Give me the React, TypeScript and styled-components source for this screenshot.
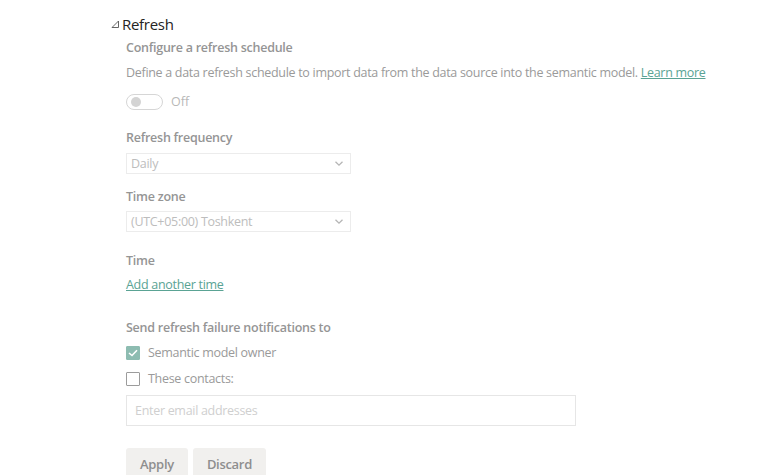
import React from "react";
import styled, { createGlobalStyle } from "styled-components";

const GlobalStyle = createGlobalStyle`
  body {
    margin: 0;
    background: #ffffff;
    font-family: "Open Sans", "Noto Sans", Arial, sans-serif;
  }
`;

const Page = styled.div`
  width: 757px;
  height: 475px;
  overflow: hidden;
  padding: 14px 0 0 111px;
  box-sizing: border-box;
`;

const SectionHeader = styled.div`
  display: flex;
  align-items: center;
  gap: 2px;
  color: #252423;
  font-size: 15px;
  line-height: 20px;
  letter-spacing: -0.3px;
`;

const Body = styled.div`
  padding-left: 15px;
  display: flex;
  flex-direction: column;
`;

const Heading = styled.div<{ $top?: number }>`
  margin-top: ${(p) => p.$top ?? 0}px;
  color: #959595;
  font-size: 12.5px;
  font-weight: 600;
  line-height: 18px;
  letter-spacing: -0.25px;
`;

const Description = styled.div`
  margin-top: 7px;
  color: #9a9a9a;
  font-size: 12.5px;
  line-height: 18px;
  letter-spacing: -0.3px;
`;

const Link = styled.a`
  color: #5aa394;
  text-decoration: underline;
  cursor: pointer;
`;

const ToggleRow = styled.div`
  margin-top: 11px;
  display: flex;
  align-items: center;
  gap: 8px;
  color: #b8b8b8;
  font-size: 12.5px;
`;

const Track = styled.div`
  width: 31px;
  height: 14px;
  border: 1px solid #d6d6d6;
  border-radius: 9px;
  display: flex;
  align-items: center;
  padding-left: 4px;
  box-sizing: content-box;
`;

const Knob = styled.div`
  width: 10px;
  height: 10px;
  border-radius: 50%;
  background: #d4d4d4;
`;

const Select = styled.div<{ $top?: number }>`
  margin-top: ${(p) => p.$top ?? 6}px;
  width: 225px;
  height: 21px;
  border: 1px solid #ececec;
  box-sizing: border-box;
  display: flex;
  align-items: center;
  justify-content: space-between;
  padding: 0 6px 0 4px;
  color: #bdbdbd;
  font-size: 12.5px;
  letter-spacing: -0.3px;
`;

const LinkLine = styled.div`
  margin-top: 6px;
  font-size: 12.5px;
  line-height: 18px;
  letter-spacing: -0.3px;
`;

const CheckRow = styled.label<{ $top: number }>`
  margin-top: ${(p) => p.$top}px;
  display: flex;
  align-items: center;
  gap: 8px;
  color: #9a9a9a;
  font-size: 12.5px;
  line-height: 18px;
  letter-spacing: -0.3px;
`;

const Box = styled.span<{ $checked?: boolean }>`
  width: 14px;
  height: 14px;
  box-sizing: border-box;
  border: 1px solid ${(p) => (p.$checked ? "#8dbcb1" : "#9c9c9c")};
  background: ${(p) => (p.$checked ? "#8dbcb1" : "#fff")};
  border-radius: 1px;
  display: flex;
  align-items: center;
  justify-content: center;
`;

const EmailInput = styled.div`
  margin-top: 7px;
  width: 450px;
  height: 31px;
  border: 1px solid #e6e6e6;
  box-sizing: border-box;
  display: flex;
  align-items: center;
  padding-left: 8px;
  color: #cfcfcf;
  font-size: 12.5px;
  letter-spacing: -0.3px;
`;

const Buttons = styled.div`
  margin-top: 22px;
  display: flex;
  gap: 5px;
`;

const Button = styled.button`
  height: 30px;
  padding: 1px 14px 0;
  border: none;
  border-radius: 3px 3px 0 0;
  background: #f1f0ee;
  color: #8e8e8e;
  font-family: inherit;
  font-size: 13px;
  font-weight: 600;
  letter-spacing: -0.3px;
`;

const Chevron = () => (
  <svg width="10" height="7" viewBox="0 0 10 7">
    <path d="M1.5 1.8 L5 5.2 L8.5 1.8" fill="none" stroke="#b5b5b5" strokeWidth="1.3" />
  </svg>
);

export default function App() {
  return (
    <Page>
      <GlobalStyle />
      <SectionHeader>
        <svg width="9" height="9" viewBox="0 0 9 9">
          <path d="M7.5 1 L7.5 7.5 L1 7.5 Z" fill="none" stroke="#555" strokeWidth="0.9" />
        </svg>
        Refresh
      </SectionHeader>
      <Body>
        <Heading $top={5}>Configure a refresh schedule</Heading>
        <Description>
          Define a data refresh schedule to import data from the data source into the semantic
          model. <Link>Learn more</Link>
        </Description>
        <ToggleRow>
          <Track>
            <Knob />
          </Track>
          Off
        </ToggleRow>
        <Heading $top={19}>Refresh frequency</Heading>
        <Select>
          Daily
          <Chevron />
        </Select>
        <Heading $top={14}>Time zone</Heading>
        <Select $top={5}>
          (UTC+05:00) Toshkent
          <Chevron />
        </Select>
        <Heading $top={20}>Time</Heading>
        <LinkLine>
          <Link>Add another time</Link>
        </LinkLine>
        <Heading $top={25}>Send refresh failure notifications to</Heading>
        <CheckRow $top={7}>
          <Box $checked>
            <svg width="10" height="8" viewBox="0 0 10 8">
              <path d="M1 4 L4 6.5 L9 1.2" fill="none" stroke="#fff" strokeWidth="1.6" />
            </svg>
          </Box>
          Semantic model owner
        </CheckRow>
        <CheckRow $top={8}>
          <Box />
          These contacts:
        </CheckRow>
        <EmailInput>Enter email addresses</EmailInput>
        <Buttons>
          <Button>Apply</Button>
          <Button>Discard</Button>
        </Buttons>
      </Body>
    </Page>
  );
}
